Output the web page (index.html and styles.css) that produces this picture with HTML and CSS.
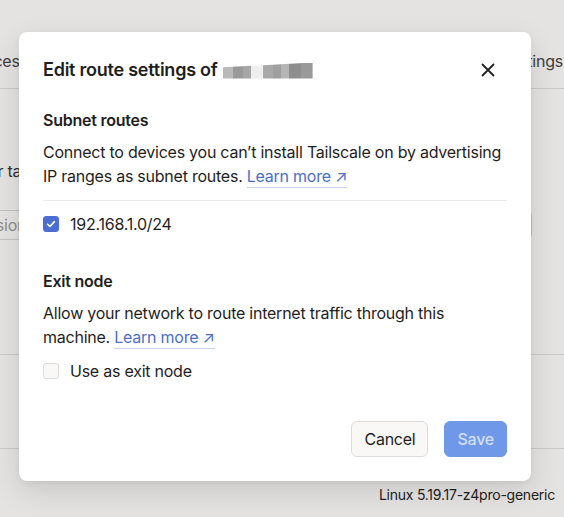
FILE: index.html
```html
<html>

<head>
    <meta charset="utf-8">
    <link rel="stylesheet" href="styles.css">
</head>

<body>
    <header class="tabs">
        <span class="tab">Devices</span>
        <span class="tab tab-right">Settings</span>
    </header>
    <main class="page">
        <p class="hint">Add tags to your tailnet</p>
        <div class="search">Version</div>
        <div class="rule rule-a"></div>
        <div class="rule rule-b"></div>
        <p class="os">Linux 5.19.17-z4pro-generic</p>
    </main>

    <div class="backdrop">
        <div class="dialog">
            <div class="dialog-head">
                <h2>Edit route settings of <span class="masked"></span></h2>
                <button class="close" aria-label="Close">
                    <svg width="14" height="14" viewBox="0 0 14 14">
                        <path d="M1.5 1.5l11 11M12.5 1.5l-11 11" stroke="#222" stroke-width="1.8" stroke-linecap="round" />
                    </svg>
                </button>
            </div>

            <section class="block">
                <h3>Subnet routes</h3>
                <p>
                    Connect to devices you can’t install Tailscale on by advertising
                    IP ranges as subnet routes. <a class="link">Learn more ↗</a>
                </p>
                <hr>
                <label class="check">
                    <span class="box box-on">
                        <svg width="10" height="10" viewBox="0 0 10 10">
                            <path d="M1.6 5.2l2.3 2.3 4.5-4.9" fill="none" stroke="#fff" stroke-width="1.6" stroke-linecap="round" stroke-linejoin="round" />
                        </svg>
                    </span>
                    192.168.1.0/24
                </label>
            </section>

            <section class="block block-exit">
                <h3>Exit node</h3>
                <p>
                    Allow your network to route internet traffic through this
                    machine. <a class="link">Learn more ↗</a>
                </p>
                <label class="check check-exit">
                    <span class="box"></span>
                    Use as exit node
                </label>
            </section>

            <div class="actions">
                <button class="btn">Cancel</button>
                <button class="btn btn-primary" disabled>Save</button>
            </div>
        </div>
    </div>
</body>

</html>
```

FILE: styles.css
```css
html {
    background-color: #f9f8f7;
}

body {
    margin: 0;
    height: 517px;
    overflow: hidden;
    font-family: Inter, "Noto Sans", sans-serif;
    letter-spacing: -0.015em;
    color: #1f1e1e;
    position: relative;
}

.tabs {
    height: 89px;
    box-sizing: border-box;
    border-bottom: 1px solid #dcdad8;
    display: flex;
    justify-content: space-between;
    align-items: center;
    padding-top: 34px;
    font-size: 16px;
    color: #444;
    white-space: nowrap;
    overflow: hidden;
}

.tab {
    flex: none;
    margin-left: -39px;
}

.tab-right {
    margin-left: 0;
    margin-right: 1px;
}

.page {
    display: flex;
    flex-direction: column;
    white-space: nowrap;
    overflow: hidden;
}

.hint {
    margin: 70px 0 0 -118px;
    font-size: 16px;
    color: #333;
}

.search {
    margin: 27px 32px 0 -30px;
    height: 28px;
    border: 1px solid #d6d4d2;
    border-radius: 6px;
    line-height: 28px;
    font-size: 16px;
    color: #999;
}

.rule {
    border-top: 1px solid #dcdad8;
}

.rule-a {
    margin-top: 114px;
}

.rule-b {
    margin-top: 93px;
}

.os {
    margin: 34px 9px 0 0;
    text-align: right;
    font-size: 14px;
    color: #222;
}

/* modal */

.backdrop {
    position: absolute;
    inset: 0;
    background-color: rgba(30, 25, 20, 0.09);
}

.dialog {
    position: absolute;
    left: 19px;
    top: 32px;
    width: 464px;
    padding: 24px;
    background-color: white;
    border-radius: 8px;
    box-shadow: 0 10px 30px rgba(0, 0, 0, 0.12), 0 2px 6px rgba(0, 0, 0, 0.05);
}

.dialog-head {
    display: flex;
    justify-content: space-between;
    align-items: center;
    height: 28px;
}

h2 {
    margin: 0;
    font-size: 18px;
    font-weight: 600;
    line-height: 28px;
    display: flex;
    align-items: center;
    gap: 5px;
}

.masked {
    display: inline-block;
    width: 90px;
    height: 16px;
    margin-top: 1px;
    background:
        linear-gradient(90deg,
            #b9b9b9 0 10px, #9a9a9a 10px 20px, #a6a6a6 20px 28px, #eeeeee 28px 40px,
            #a9a9a9 40px 50px, #9f9f9f 50px 58px, #b5b5b5 58px 66px, #8e8e8e 66px 78px,
            #999 78px 90px);
    clip-path: polygon(0 30%, 100% 0, 100% 100%, 0 100%);
}

.close {
    border: 0;
    background: none;
    padding: 0;
    margin-right: 12px;
    width: 14px;
    height: 14px;
    display: flex;
}

.block {
    margin-top: 24px;
}

.block-exit {
    margin-top: 33px;
}

h3 {
    margin: 0;
    font-size: 16px;
    font-weight: 600;
    line-height: 24px;
}

p {
    margin: 8px 0 0;
    font-size: 16px;
    line-height: 24px;
}

.link {
    color: #4b6fc6;
    border-bottom: 1px solid #c7d3ef;
    padding-bottom: 1px;
}

hr {
    margin: 12px 0 0;
    border: 0;
    border-top: 1px solid #eceae8;
}

.check {
    display: flex;
    align-items: center;
    gap: 11px;
    margin-top: 11px;
    height: 24px;
    font-size: 16px;
}

.check-exit {
    margin-top: 10px;
}

.box {
    width: 14px;
    height: 14px;
    border: 1px solid #dedcda;
    border-radius: 3px;
    background-color: #f9f8f7;
    display: flex;
    align-items: center;
    justify-content: center;
}

.box-on {
    border-color: #4b6fd0;
    background-color: #4b6fd0;
}

.actions {
    display: flex;
    justify-content: flex-end;
    gap: 16px;
    margin-top: 38px;
}

.btn {
    height: 36px;
    padding: 0 12px;
    font-family: inherit;
    font-size: 16px;
    letter-spacing: inherit;
    color: #1f1e1e;
    background-color: #f9f8f7;
    border: 1px solid #dedcda;
    border-radius: 6px;
}

.btn-primary {
    padding: 0 12px;
    font-weight: 500;
    color: #d3defa;
    background-color: #7098e8;
    border-color: #7098e8;
}
```
